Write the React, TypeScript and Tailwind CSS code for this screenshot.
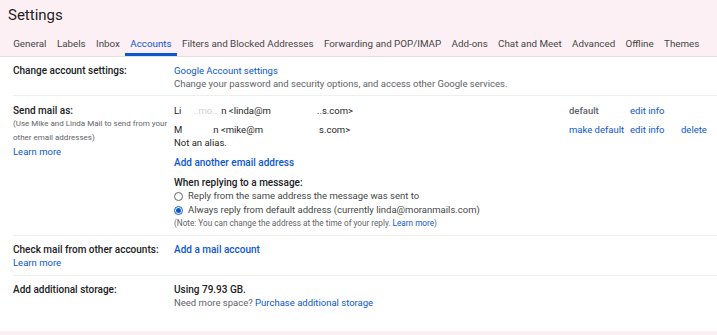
const tabs = [
    "General",
    "Labels",
    "Inbox",
    "Accounts",
    "Filters and Blocked Addresses",
    "Forwarding and POP/IMAP",
    "Add-ons",
    "Chat and Meet",
    "Advanced",
    "Offline",
    "Themes",
];

function Radio({ checked }: { checked?: boolean }) {
    return checked ? (
        <span className="w-[9px] h-[9px] rounded-full border border-[#0b57d0] flex items-center justify-center shrink-0">
            <span className="w-[5px] h-[5px] rounded-full bg-[#0b57d0]"></span>
        </span>
    ) : (
        <span className="w-[9px] h-[9px] rounded-full border border-[#5f6368] shrink-0"></span>
    );
}

export default function App() {
    return (
        <div className="w-[717px] h-[335px] overflow-hidden bg-[#fdf0f4] font-['Roboto',sans-serif] text-[#1f1f1f]">
            <div className="pl-2 pt-[5px]">
                <h1 className="text-[15px] leading-[20px] text-[#1f1f1f]">Settings</h1>
            </div>
            <div className="flex h-[32px] pl-[8px] border-b border-[#e7dde1]">
                {tabs.map((t) => (
                    <div
                        key={t}
                        className={`px-[5.2px] flex items-end text-[9.8px] leading-[13px] whitespace-nowrap ${
                            t === "Accounts"
                                ? "text-[#0b57d0] border-b-[3px] border-[#0b57d0] pb-[3.5px]"
                                : "text-[#444746] pb-[6.5px]"
                        }`}
                    >
                        {t}
                    </div>
                ))}
            </div>

            <div className="bg-white h-[274px] pl-[13px] text-[9.5px] leading-[13px]">
                {/* change account settings */}
                <div className="grid grid-cols-[161px_1fr] pt-[7px] pb-[5px] border-b border-[#efefef]">
                    <div className="text-[10px] font-medium text-[#202124]">Change account settings:</div>
                    <div>
                        <div className="text-[#0b57d0]">Google Account settings</div>
                        <div className="text-[#5f6368]">
                            Change your password and security options, and access other Google services.
                        </div>
                    </div>
                </div>

                {/* send mail as */}
                <div className="grid grid-cols-[161px_1fr] pt-[8px] pb-[6px] border-b border-[#efefef]">
                    <div>
                        <div className="text-[10px] font-medium text-[#202124]">Send mail as:</div>
                        <div className="text-[8px] leading-[14px] text-[#5f6368]">
                            (Use Mike and Linda Mail to send from your
                            <br />
                            other email addresses)
                        </div>
                        <div className="text-[#0b57d0]">Learn more</div>
                    </div>
                    <div>
                        <div className="grid grid-cols-[395px_61px_51px_auto]">
                            <div className="flex whitespace-nowrap">
                                <span>Li</span>
                                <span className="w-[12px]"></span>
                                <span className="text-[#cfcfcf]">..mo..</span>
                                <span className="w-[4px]"></span>
                                <span>n &lt;linda@m</span>
                                <span className="w-[46px]"></span>
                                <span>..s.com&gt;</span>
                            </div>
                            <div className="font-medium text-[#5f6368]">default</div>
                            <div className="text-[#0b57d0]">edit info</div>
                            <div></div>
                        </div>
                        <div className="grid grid-cols-[395px_61px_51px_auto] mt-[6px]">
                            <div className="flex whitespace-nowrap">
                                <span>M</span>
                                <span className="w-[31px]"></span>
                                <span>n &lt;mike@m</span>
                                <span className="w-[56px]"></span>
                                <span>s.com&gt;</span>
                            </div>
                            <div className="text-[#0b57d0] whitespace-nowrap">make default</div>
                            <div className="text-[#0b57d0]">edit info</div>
                            <div className="text-[#0b57d0]">delete</div>
                        </div>
                        <div>Not an alias.</div>
                        <div className="mt-[7px] text-[10px] font-medium text-[#0b57d0]">Add another email address</div>
                        <div className="mt-[7px] text-[10px] font-medium text-[#202124]">When replying to a message:</div>
                        <div className="flex items-center gap-[5px] leading-[14px] text-[#444746]">
                            <Radio />
                            <span>Reply from the same address the message was sent to</span>
                        </div>
                        <div className="flex items-center gap-[5px] leading-[14px] text-[#444746]">
                            <Radio checked />
                            <span>Always reply from default address (currently linda@moranmails.com)</span>
                        </div>
                        <div className="text-[8.2px] leading-[12px] text-[#5f6368]">
                            (Note: You can change the address at the time of your reply.{" "}
                            <span className="text-[#0b57d0]">Learn more</span>)
                        </div>
                    </div>
                </div>

                {/* check mail */}
                <div className="grid grid-cols-[161px_1fr] pt-[7px] pb-[6px] border-b border-[#efefef]">
                    <div>
                        <div className="text-[10px] font-medium text-[#202124]">Check mail from other accounts:</div>
                        <div className="text-[#0b57d0]">Learn more</div>
                    </div>
                    <div className="text-[10px] font-medium text-[#0b57d0]">Add a mail account</div>
                </div>

                {/* storage */}
                <div className="grid grid-cols-[161px_1fr] pt-[7px]">
                    <div className="text-[10px] font-medium text-[#202124]">Add additional storage:</div>
                    <div>
                        <div className="text-[10px] font-medium text-[#202124]">Using 79.93 GB.</div>
                        <div className="text-[#5f6368]">
                            Need more space? <span className="text-[#0b57d0]">Purchase additional storage</span>
                        </div>
                    </div>
                </div>
            </div>
        </div>
    );
}
